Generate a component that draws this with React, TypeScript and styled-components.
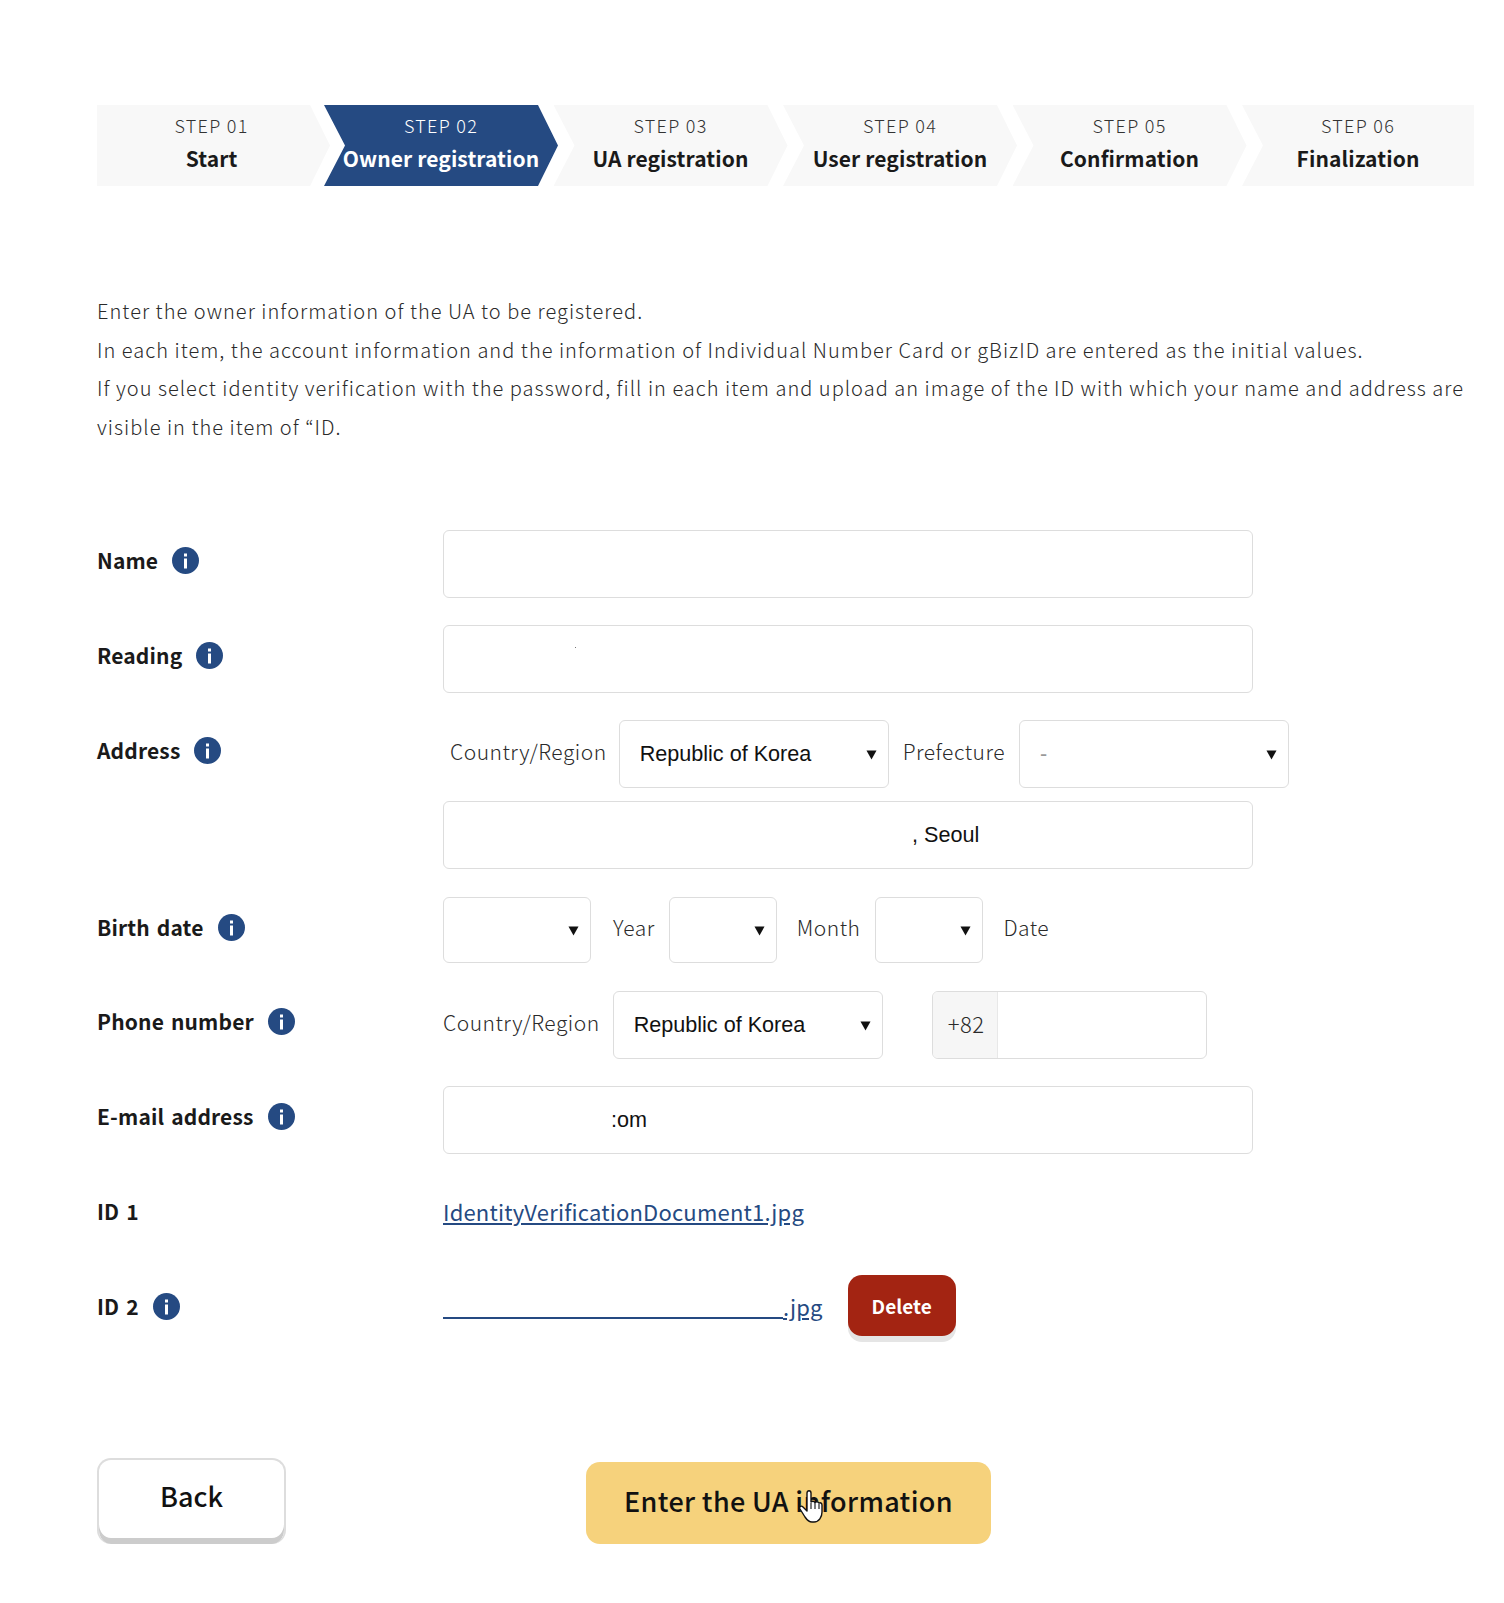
import styled, { createGlobalStyle } from 'styled-components';

const GlobalStyle = createGlobalStyle`
  html, body { margin: 0; padding: 0; background: #fff; }
  body { font-family: 'Noto Sans CJK JP', 'Noto Sans', sans-serif; color: #333; }
`;

const Page = styled.div`
  width: 1504px;
  height: 1603px;
  padding: 105px 30px 0 97px;
  box-sizing: border-box;
  position: relative;
  overflow: hidden;
`;

const Steps = styled.ol`
  display: flex;
  list-style: none;
  margin: 0;
  padding: 0;
`;

const Step = styled.li<{ $active?: boolean; $first?: boolean; $last?: boolean }>`
  flex: 0 0 ${(p) => (p.$first ? 233 : p.$last ? 232 : 234)}px;
  margin-right: ${(p) => (p.$first ? -6 : p.$last ? 0 : -4.5)}px;
  padding: 0 ${(p) => (p.$first ? 4 : 0)}px 5px 0;
  height: 81px;
  box-sizing: border-box;
  display: flex;
  flex-direction: column;
  align-items: center;
  justify-content: center;
  background: ${(p) => (p.$active ? '#254a82' : '#f8f8f8')};
  color: ${(p) => (p.$active ? '#fff' : '#333')};
  clip-path: ${(p) =>
    p.$first
      ? 'polygon(0 0, 213px 0, 100% 50%, 213px 100%, 0 100%)'
      : p.$last
      ? 'polygon(0 0, 100% 0, 100% 100%, 0 100%, 21px 50%)'
      : 'polygon(0 0, 214px 0, 100% 50%, 214px 100%, 0 100%, 21px 50%)'};
`;

const StepNo = styled.span`
  font-size: 18px;
  font-weight: 300;
  line-height: 26px;
  letter-spacing: 1.3px;
  margin-bottom: 4px;
`;

const StepName = styled.strong<{ $active?: boolean }>`
  font-size: 21px;
  line-height: 33px;
  font-weight: 700;
  letter-spacing: 0.1px;
  color: ${(p) => (p.$active ? '#fff' : '#1a1a1a')};
  white-space: nowrap;
`;

const Intro = styled.p`
  margin: 106px 0 0;
  font-size: 20px;
  font-weight: 300;
  line-height: 38.6px;
  letter-spacing: 1.03px;
  color: #2a2a2a;
`;

const Form = styled.div`
  margin-top: 84px;
  display: flex;
  flex-direction: column;
`;

const Row = styled.div<{ $h?: number; $mb?: number }>`
  display: grid;
  grid-template-columns: 346px 1fr;
  margin-bottom: ${(p) => p.$mb ?? 27}px;
  min-height: ${(p) => p.$h ?? 68}px;
`;

const Label = styled.div`
  display: flex;
  align-items: center;
  gap: 14px;
  height: 60px;
  font-size: 21px;
  font-weight: 700;
  letter-spacing: 0.15px;
  word-spacing: 2px;
  color: #1a1a1a;
`;

const InfoBadge = styled.span`
  width: 27px;
  height: 27px;
  display: block;
`;

const Fields = styled.div`
  display: flex;
  flex-direction: column;
  gap: 13px;
`;

const Line = styled.div`
  display: flex;
  align-items: flex-start;
`;

const Field = styled.div<{ $w?: number; $pad?: number }>`
  width: ${(p) => p.$w ?? 810}px;
  height: 68px;
  box-sizing: border-box;
  border: 1px solid #ddd;
  border-radius: 6px;
  padding-left: ${(p) => p.$pad ?? 20}px;
  display: flex;
  align-items: center;
  font: 21.6px 'Liberation Sans', Arial, sans-serif;
  color: #111;
`;

const SelectBox = styled.div<{ $w: number; $muted?: boolean; $h?: number }>`
  width: ${(p) => p.$w}px;
  height: ${(p) => p.$h ?? 68}px;
  flex: none;
  box-sizing: border-box;
  border: 1px solid #ddd;
  border-radius: 6px;
  padding: 0 11px 0 20px;
  display: flex;
  align-items: center;
  justify-content: space-between;
  font: 21.6px 'Liberation Sans', Arial, sans-serif;
  color: ${(p) => (p.$muted ? '#999' : '#111')};
`;

const Caret = styled.svg`
  width: 11px;
  height: 11px;
  flex: none;
`;

const Unit = styled.span<{ $ml?: number; $mr?: number; $h?: number }>`
  margin-left: ${(p) => p.$ml ?? 0}px;
  margin-right: ${(p) => p.$mr ?? 0}px;
  line-height: ${(p) => p.$h ?? 62}px;
  font-size: 21px;
  font-weight: 300;
  letter-spacing: 0.5px;
  white-space: nowrap;
  color: #2a2a2a;
`;

const PhoneBox = styled.div`
  margin-left: 49px;
  width: 275px;
  height: 68px;
  box-sizing: border-box;
  border: 1px solid #ddd;
  border-radius: 6px;
  overflow: hidden;
  display: flex;
`;

const Prefix = styled.span`
  width: 65px;
  background: #f6f6f6;
  border-right: 1px solid #e8e8e8;
  font-size: 22px;
  font-weight: 300;
  letter-spacing: 0.5px;
  line-height: 62px;
  padding-left: 15px;
  box-sizing: border-box;
  color: #2a2a2a;
`;

const FileLink = styled.a`
  color: #254a82;
  font-size: 22px;
  line-height: 60px;
  letter-spacing: 0.2px;
  text-decoration: underline;
  white-space: nowrap;
`;

const MaskedName = styled.span`
  display: inline-block;
  width: 340px;
  height: 32px;
  border-bottom: 2px solid #254a82;
  vertical-align: -3px;
`;

const FileRow = styled.div`
  display: flex;
  align-items: flex-start;
  gap: 25px;
`;

const Tiny = styled.i`
  position: absolute;
  left: 575px;
  top: 647px;
  width: 1px;
  height: 1px;
  background: #777;
`;

const DeleteButton = styled.button`
  width: 108px;
  height: 61px;
  margin-top: -1px;
  border: 0;
  border-radius: 14px;
  background: #a32412;
  box-shadow: 0 6px 0 #e5e5e5;
  color: #fff;
  font: 700 19px 'Noto Sans CJK JP', 'Noto Sans', sans-serif;
`;

const Actions = styled.div`
  margin-top: 95px;
  display: flex;
  align-items: flex-end;
`;

const BackButton = styled.button`
  width: 189px;
  height: 86px;
  box-sizing: border-box;
  border: 2px solid #ddd;
  border-bottom-width: 0;
  border-radius: 14px;
  background: #fff;
  box-shadow: inset 0 -6px 0 #ccc;
  color: #111;
  padding-bottom: 14px;
  font: 500 27px 'Noto Sans CJK JP', 'Noto Sans', sans-serif;
`;

const PrimaryButton = styled.button`
  margin-left: 300px;
  width: 405px;
  height: 82px;
  border: 0;
  border-radius: 14px;
  background: #f6d27c;
  color: #111;
  padding-bottom: 6px;
  letter-spacing: 0.35px;
  font: 500 27px 'Noto Sans CJK JP', 'Noto Sans', sans-serif;
`;

const HandCursor = styled.svg`
  position: absolute;
  left: 799px;
  top: 1490px;
  width: 26px;
  height: 34px;
`;

const steps = [
  ['STEP 01', 'Start'],
  ['STEP 02', 'Owner registration'],
  ['STEP 03', 'UA registration'],
  ['STEP 04', 'User registration'],
  ['STEP 05', 'Confirmation'],
  ['STEP 06', 'Finalization'],
];

function Info() {
  return (
    <InfoBadge>
      <svg viewBox="0 0 27 27" width="27" height="27">
        <circle cx="13.5" cy="13.5" r="13.5" fill="#254a82" />
        <rect x="12" y="11.5" width="3" height="10" fill="#fff" />
        <rect x="12" y="6.5" width="3" height="3" fill="#fff" />
      </svg>
    </InfoBadge>
  );
}

function Select({ w, value, muted, h }: { w: number; value?: string; muted?: boolean; h?: number }) {
  return (
    <SelectBox $w={w} $muted={muted} $h={h}>
      <span>{value}</span>
      <Caret viewBox="0 0 11 11">
        <path d="M0.5 1.5h10L5.5 10.5z" fill="#111" />
      </Caret>
    </SelectBox>
  );
}

export default function App() {
  return (
    <Page>
      <GlobalStyle />
      <Steps>
        {steps.map(([no, name], i) => (
          <Step key={no} $active={i === 1} $first={i === 0} $last={i === 5}>
            <StepNo>{no}</StepNo>
            <StepName $active={i === 1}>{name}</StepName>
          </Step>
        ))}
      </Steps>

      <Intro>
        Enter the owner information of the UA to be registered.
        <br />
        In each item, the account information and the information of Individual Number Card or gBizID are entered as the initial values.
        <br />
        If you select identity verification with the password, fill in each item and upload an image of the ID with which your name and address are visible in the item of “ID.
      </Intro>

      <Form>
        <Row>
          <Label>Name <Info /></Label>
          <Field />
        </Row>
        <Row>
          <Label>Reading <Info /></Label>
          <Field />
        </Row>
        <Row $mb={28}>
          <Label>Address <Info /></Label>
          <Fields>
            <Line>
              <Unit $ml={7} $mr={12}>Country/Region</Unit>
              <Select w={270} value="Republic of Korea" />
              <Unit $ml={14} $mr={14}>Prefecture</Unit>
              <Select w={270} value="-" muted />
            </Line>
            <Field $pad={468}>, Seoul</Field>
          </Fields>
        </Row>
        <Row $h={66} $mb={28}>
          <Label>Birth date <Info /></Label>
          <Line>
            <Select w={148} h={66} />
            <Unit $ml={22} $mr={14} $h={60}>Year</Unit>
            <Select w={108} h={66} />
            <Unit $ml={20} $mr={15} $h={60}>Month</Unit>
            <Select w={108} h={66} />
            <Unit $ml={20} $h={60}>Date</Unit>
          </Line>
        </Row>
        <Row>
          <Label>Phone number <Info /></Label>
          <Line>
            <Unit $mr={13}>Country/Region</Unit>
            <Select w={270} value="Republic of Korea" />
            <PhoneBox>
              <Prefix>+82</Prefix>
            </PhoneBox>
          </Line>
        </Row>
        <Row>
          <Label>E-mail address <Info /></Label>
          <Field $pad={167}>:om</Field>
        </Row>
        <Row $h={68}>
          <Label>ID 1</Label>
          <FileLink>IdentityVerificationDocument1.jpg</FileLink>
        </Row>
        <Row $h={60}>
          <Label>ID 2 <Info /></Label>
          <FileRow>
            <FileLink><MaskedName />.jpg</FileLink>
            <DeleteButton>Delete</DeleteButton>
          </FileRow>
        </Row>
      </Form>

      <Actions>
        <BackButton>Back</BackButton>
        <PrimaryButton>Enter the UA information</PrimaryButton>
      </Actions>

      <Tiny />
      <HandCursor viewBox="0 0 26 34">
        <path
          d="M8 3c0-3 4-3 4 0v9c1-1 3-1 4 .5 1-1 3-1 4 .6 1-.6 3-.3 3 1.9v7c0 5-3 10-8 10h-2c-3 0-5-2-7-5l-5-8c-1-2 1-4 3-2l4 4z"
          fill="#fff"
          stroke="#111"
          strokeWidth="1.4"
          strokeLinejoin="round"
        />
        <path d="M12 13v6M16 13v6M20 14v5" stroke="#111" strokeWidth="1.1" fill="none" />
      </HandCursor>
    </Page>
  );
}
